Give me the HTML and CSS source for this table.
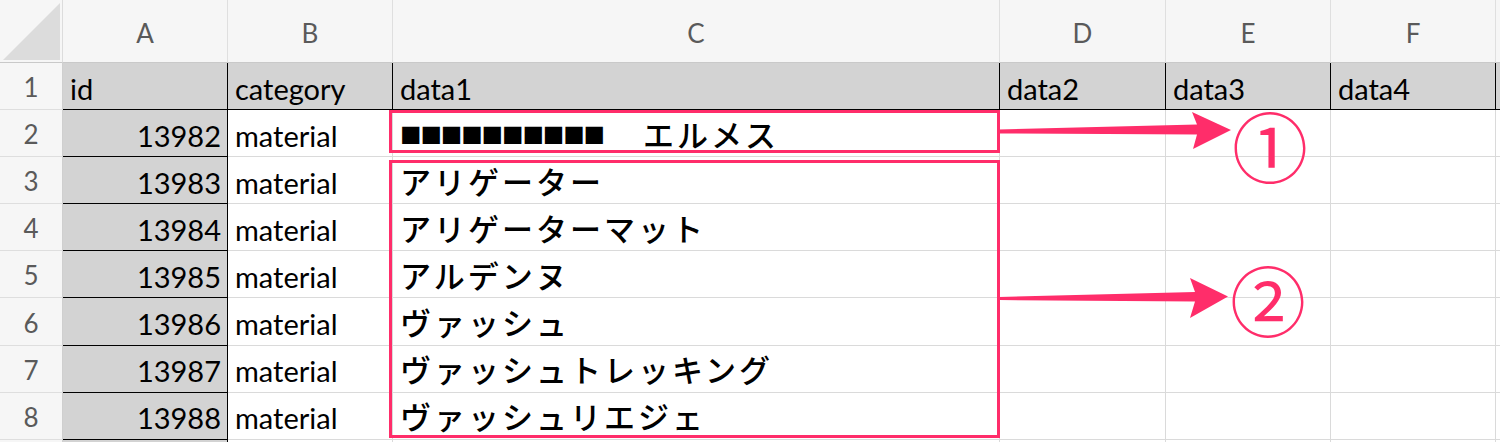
FILE: index.html
```html
<!DOCTYPE html>
<html lang="ja">
<head>
<meta charset="utf-8">
<title>sheet</title>
<link rel="stylesheet" href="styles.css">
</head>
<body>
<div class="page">
  <div class="sheet">
    <div class="corner"><span class="tri"></span></div>
    <div class="ch">A</div>
    <div class="ch">B</div>
    <div class="ch">C</div>
    <div class="ch">D</div>
    <div class="ch">E</div>
    <div class="ch">F</div>
    <div class="ch ch-last"></div>

    <div class="rh">1</div>
    <div class="cell hdr">id</div>
    <div class="cell hdr">category</div>
    <div class="cell hdr">data1</div>
    <div class="cell hdr">data2</div>
    <div class="cell hdr">data3</div>
    <div class="cell hdr">data4</div>
    <div class="cell hdr"></div>

    <div class="rh">2</div>
    <div class="cell idc">13982</div>
    <div class="cell">material</div>
    <div class="cell jp"><span class="mask">■■■■■■■■■■</span><span class="after">エルメス</span></div>
    <div class="cell"></div><div class="cell"></div><div class="cell"></div><div class="cell"></div>

    <div class="rh">3</div>
    <div class="cell idc">13983</div>
    <div class="cell">material</div>
    <div class="cell jp">アリゲーター</div>
    <div class="cell"></div><div class="cell"></div><div class="cell"></div><div class="cell"></div>

    <div class="rh">4</div>
    <div class="cell idc">13984</div>
    <div class="cell">material</div>
    <div class="cell jp">アリゲーターマット</div>
    <div class="cell"></div><div class="cell"></div><div class="cell"></div><div class="cell"></div>

    <div class="rh">5</div>
    <div class="cell idc">13985</div>
    <div class="cell">material</div>
    <div class="cell jp">アルデンヌ</div>
    <div class="cell"></div><div class="cell"></div><div class="cell"></div><div class="cell"></div>

    <div class="rh">6</div>
    <div class="cell idc">13986</div>
    <div class="cell">material</div>
    <div class="cell jp">ヴァッシュ</div>
    <div class="cell"></div><div class="cell"></div><div class="cell"></div><div class="cell"></div>

    <div class="rh">7</div>
    <div class="cell idc">13987</div>
    <div class="cell">material</div>
    <div class="cell jp">ヴァッシュトレッキング</div>
    <div class="cell"></div><div class="cell"></div><div class="cell"></div><div class="cell"></div>

    <div class="rh">8</div>
    <div class="cell idc">13988</div>
    <div class="cell">material</div>
    <div class="cell jp">ヴァッシュリエジェ</div>
    <div class="cell"></div><div class="cell"></div><div class="cell"></div><div class="cell"></div>

    <div class="rh"></div>
    <div class="cell idc"></div>
    <div class="cell"></div>
    <div class="cell"></div>
    <div class="cell"></div><div class="cell"></div><div class="cell"></div><div class="cell"></div>
  </div>

  <div class="box box1"></div>
  <div class="box box2"></div>
  <svg class="arrows" width="1500" height="442" viewBox="0 0 1500 442">
    <polygon class="arrow" points="999,129.5 1197,124.5 1192,112 1231,130 1193,149 1197,134.5 999,133.5"/>
    <polygon class="arrow" points="999,297 1195,292 1190,278 1228,296.5 1190,318 1195,301.5 999,300"/>
  </svg>
  <div class="mark mark1">①</div>
  <div class="mark mark2">②</div>
</div>
</body>
</html>
```

FILE: styles.css
```css
html, body {
  margin: 0;
  padding: 0;
  background: #ffffff;
  overflow: hidden;
}

.page {
  position: relative;
  width: 1500px;
  height: 442px;
  overflow: hidden;
}

.sheet {
  display: grid;
  grid-template-columns: 63px 165px 165px 607px 166px 165px 165px 1fr;
  grid-template-rows: 63px repeat(9, 47.1px);
  font-family: "Lato", "Liberation Sans", "Noto Sans CJK JP", sans-serif;
  font-size: 29px;
  color: #000;
}

.corner {
  background: #f6f6f6;
  border-right: 1px solid #dcdcdc;
  border-bottom: 1px solid #c9c9c9;
  box-sizing: border-box;
  position: relative;
}

.tri {
  position: absolute;
  right: 2px;
  bottom: 2px;
  width: 0;
  height: 0;
  border-style: solid;
  border-width: 0 0 57px 57px;
  border-color: transparent transparent #dcdcdc transparent;
}

.ch {
  background: #f6f6f6;
  border-right: 1px solid #dfdfdf;
  border-bottom: 1px solid #c9c9c9;
  box-sizing: border-box;
  display: flex;
  align-items: center;
  justify-content: center;
  color: #5a5a5a;
  font-size: 26px;
  padding-top: 3px;
}

.rh {
  background: #f6f6f6;
  border-right: 1px solid #cfcfcf;
  border-bottom: 1px solid #dedede;
  box-sizing: border-box;
  display: flex;
  align-items: center;
  justify-content: center;
  color: #5a5a5a;
  font-size: 26px;
  padding-top: 2px;
}

.cell {
  border-right: 1px solid #dadada;
  border-bottom: 1px solid #dadada;
  box-sizing: border-box;
  display: flex;
  align-items: center;
  padding: 4px 0 0 7px;
  white-space: nowrap;
  overflow: hidden;
}

.hdr {
  background: #d3d3d3;
  border-right: 1px solid #000;
  border-bottom: 1px solid #000;
}

.idc {
  background: #d3d3d3;
  border-right: 1px solid #000;
  border-bottom: 1px solid #000;
  justify-content: flex-end;
  padding-left: 0;
  padding-right: 6px;
}

.jp {
  font-family: "Noto Sans CJK JP", sans-serif;
  font-size: 31px;
  font-weight: 500;
  letter-spacing: 3px;
  padding-left: 7px;
  padding-top: 0;
  overflow: visible;
}

.mask {
  font-size: 21.5px;
  letter-spacing: -1.1px;
}

.after {
  margin-left: 39px;
}

.box {
  position: absolute;
  border: 3px solid #ff2d6a;
  box-sizing: border-box;
}

.box1 {
  left: 389px;
  top: 110px;
  width: 611px;
  height: 43px;
}

.box2 {
  left: 389px;
  top: 160px;
  width: 611px;
  height: 278px;
}

.arrows {
  position: absolute;
  left: 0;
  top: 0;
}

.arrow {
  fill: #ff2d6a;
}

.mark {
  position: absolute;
  width: 90px;
  height: 90px;
  display: flex;
  align-items: center;
  justify-content: center;
  font-family: "Noto Sans CJK JP", sans-serif;
  font-size: 76px;
  line-height: 1;
  color: #ff2d6a;
}

.mark1 {
  left: 1225px;
  top: 99px;
}

.mark2 {
  left: 1223px;
  top: 253px;
}
```
